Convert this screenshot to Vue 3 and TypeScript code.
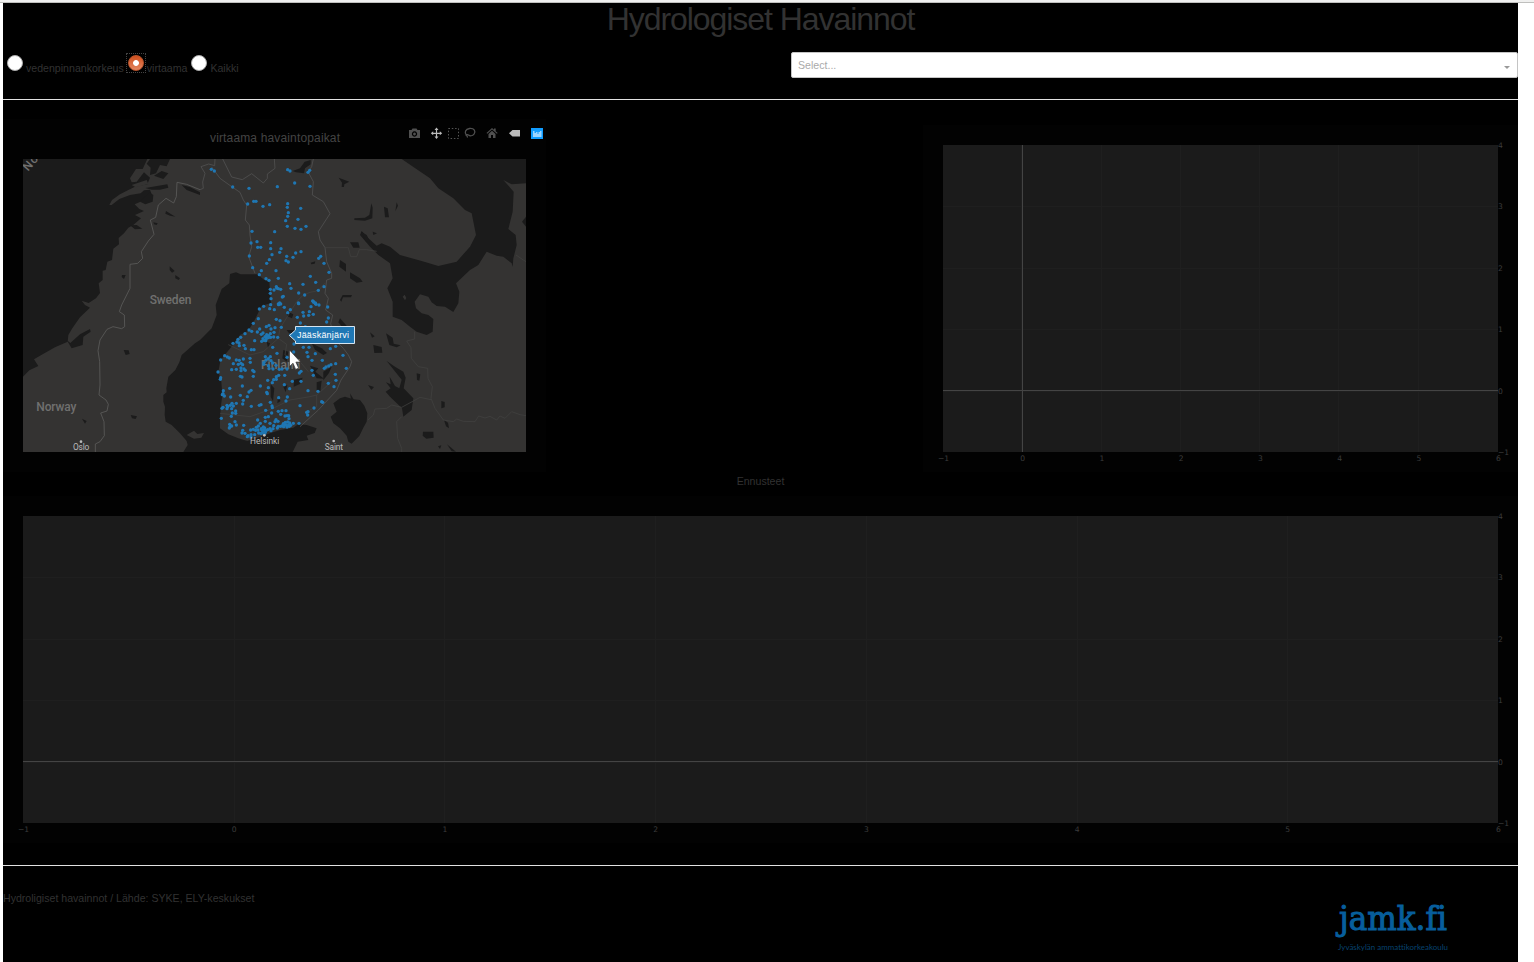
<script setup lang="ts">
import { ref } from 'vue'

interface Chart { width: number; plot: number }

const options = ['vedenpinnankorkeus', 'virtaama', 'Kaikki']
const selected = ref('virtaama')

const small: Chart = { width: 595, plot: 555 }
const large: Chart = { width: 1515, plot: 1475 }
const xTicks = [0, 1, 2, 3, 4, 5, 6, 7]
const yTicks = [0, 1, 2, 3, 4, 5]
const xGrid = xTicks.slice(1, -1)
const yGrid = yTicks.slice(1, -1)
const tick = (n: number) => (n < 0 ? '−' + -n : String(n))

const parse = (s: string) => s.trim().split(/\s+/).map(p => p.split(',').map(Number))

// Observation stations, in the map tile's own units (three to a pixel)
const north = parse(`64,43 73,48 293,44 300,48 354,52 359,46 314,84 262,95 360,94 128,96 177,100
173,147 191,139 198,139 219,154 239,149 293,146 292,157 332,160 295,173 293,184 287,197 324,193
292,214 348,214 315,220 333,223 186,229 254,230 183,264 201,260 242,263 203,277 212,277 242,281
273,281 269,292 246,299 178,303 238,314 230,325 290,304 309,307 317,294 333,290 288,317 295,321
392,304 386,310 402,325 417,352 188,338 214,347 208,359 258,347 228,371 237,376 265,370 361,364
377,382 299,386 303,400 339,388 402,395 385,406 259,395 265,401 272,403 260,399 252,405 241,403
241,415 243,431 277,426 280,424 326,414 344,420 370,439 376,444 326,446 265,447 272,447 378,448`)
const south = parse(`208,27 221,19 239,26 253,29 269,9 266,14 242,14 283,22 205,56 190,70 177,90 165,101
152,112 144,118 141,126 129,130 147,129 148,137 162,136 166,146 184,149 192,149 194,122 185,94
202,96 209,87 214,103 219,99 229,80 237,76 243,87 255,83 259,58 270,62 274,82 252,97 241,101 230,104
225,110 219,116 215,124 222,121 228,118 235,113 242,112 251,111 263,112 229,111 236,107 227,122
301,29 293,38 325,9 322,52 339,37 341,48 356,46 358,35 370,43 363,20 387,15 377,11 371,7 368,3
413,21 415,54 410,66 331,69 346,80 302,105 312,132 340,142 357,142 351,157 354,170 376,161
437,139 421,146 459,166 469,205 437,191 423,194 416,198 408,201 403,205 397,181 366,181 366,211
370,226 436,223 438,241 432,260 415,250 333,244 333,214 328,219 307,244 291,207 284,226 266,226
259,230 259,238 247,248 251,239 233,241 211,258 235,263 230,277 232,281 246,318 241,307 266,293
292,291 288,303 283,254 299,266 308,177 311,156 291,172 261,160 248,142 241,170 235,176 228,180
222,187 221,193 235,197 237,206 249,207 248,189 243,182 226,170 258,196 268,208 276,207
180,175 181,187 160,177 148,181 153,190 145,193 158,194 153,204 162,207 139,208 153,212 166,211
188,211 192,215 190,229 151,229 156,231 139,180 130,191 125,209 104,167 112,171 118,174 92,180
84,216 92,233 91,238 119,265 100,272 99,281 103,288 97,284 122,291 151,286 157,258 183,271 177,276
172,290 160,301 158,312 184,319 208,316 213,314 227,331 245,339 235,350 226,352 247,323
139,310 126,310 121,316 130,318 113,320 111,326 125,326 127,339 137,333 137,340 124,349 99,322
96,325 94,355 111,316 119,373 121,379 118,384 135,365 139,375 125,378 161,376 158,391 156,399
165,400 172,410 183,404 182,390 190,388 199,382 205,378 197,391 206,399 214,386 220,381 224,384
216,391 222,390 229,391 219,397 226,397 224,402 213,401 204,390 183,411 194,404 211,370 226,364
203,360 240,370 251,377 255,365 249,386 240,386 265,379 272,379 262,384 281,380 280,371 286,367
293,366 289,375 296,376 302,376 284,375 291,381 299,369 298,379 277,377 264,364 258,359 291,347
297,356 310,370 327,370 265,334 276,332 288,332 272,343 285,348 296,347 330,317 353,345 354,335
372,324 395,305 398,307 384,274 354,272 350,337 214,400 174,407 243,392 233,389`)

const water = [
  // Norwegian Sea
  '9,12 382,12 368,42 348,42 330,70 335,82 350,80 372,52 390,68 382,88 345,95 325,105 300,118 276,135 268,150 275,150 298,132 330,120 362,115 372,106 390,104 395,118 365,139 344,148 358,162 372,168 345,180 363,190 340,210 325,218 312,235 296,249 297,268 280,281 276,315 262,320 257,345 248,347 248,375 236,385 240,414 228,430 206,444 185,437 195,450 210,458 180,487 157,520 145,540 143,560 105,577 60,602 42,613 55,633 28,646 9,665',
  '140,555 151,564 180,538 210,522 212,530 190,545 188,570 155,580',
  '390,12 450,12 440,34 420,30 408,55 390,60 392,38 380,26',
  '445,55 430,72 402,62 425,48', '376,99 442,88 445,98 420,104 395,104',
  '388,112 400,120 398,140 376,148 360,140', '485,90 510,96 540,112 540,120 500,105',
  '438,168 466,185 450,182 436,176', '330,211 350,210 367,221 345,223', '400,202 413,205 410,210 402,208',
  '449,334 464,348 456,353 449,345', '466,360 480,370 476,375 466,370', '306,360 317,360 312,372 305,366',
  '311,585 326,586 329,597 317,600', '332,780 351,784 347,792 336,790', '186,791 200,798 195,806',
  // Gulf of Bothnia and Gulf of Finland
  '630,357 648,352 662,358 712,358 732,374 748,382 750,410 753,444 725,452 704,495 685,527 660,540 637,572 614,600 601,618 595,650 604,680 607,720 602,760 600,795 600,820 625,838 655,850 682,858 700,852 718,847 750,835 780,825 820,818 835,808 860,810 890,820 884,834 860,842 865,855 833,860 818,891 490,891 503,870 500,858 480,835 455,810 437,800 434,780 435,755 430,740 430,720 440,712 439,700 445,665 466,645 478,622 485,600 503,584 525,565 540,555 555,540 575,520 590,480 587,450 605,402 628,385',
  // Lakes and White Sea
  '940,745 960,730 975,725 1000,733 1020,735 1033,752 1042,775 1040,800 1030,818 1018,843 995,866 985,860 980,842 960,820 940,805 932,785 950,770',
  '1145,12 1230,70 1255,100 1300,130 1335,165 1355,175 1368,240 1350,275 1310,320 1255,333 1205,318 1140,300 1110,275 1085,265 1070,272 1045,250 1025,228 1020,240 1050,275 1075,300 1110,325 1118,370 1102,400 1118,440 1118,485 1145,495 1170,515 1190,530 1220,540 1238,530 1240,492 1225,480 1205,475 1188,460 1184,440 1200,418 1225,425 1235,442 1250,453 1275,455 1300,471 1315,445 1318,410 1308,385 1350,345 1375,330 1400,290 1430,302 1450,305 1475,325 1478,336 1480,310 1490,270 1487,240 1465,222 1478,170 1481,110 1450,75 1475,88 1518,85 1518,12',
  '1518,185 1506,200 1518,215',
  '818,48 840,40 854,20 872,15 872,28 855,40 852,55 828,52', '956,68 988,80 973,88 972,96 965,96 966,83',
  '1054,145 1058,158 1057,190 1035,197 1003,195 1003,190 1035,188 1048,180', '1092,155 1103,160 1107,187 1095,187',
  '1130,142 1134,152 1126,169', '1024,230 1040,240 1052,264 1036,258', '1058,230 1071,235 1060,240',
  '990,262 1015,262 1019,278 1000,278', '960,315 978,327 978,350 958,335', '990,352 1020,370 1028,380 1010,383 990,370',
  '960,435 968,420 996,420 993,427 969,427 964,440', '872,323 886,319 884,326 874,328',
  '1098,535 1118,548 1121,566 1142,571 1130,577 1108,570', '1060,570 1085,576 1087,593 1063,594', '1050,532 1064,544 1056,548',
  '1100,618 1125,635 1150,650 1157,668 1151,700 1180,730 1175,765 1150,785 1146,760 1110,725 1097,710 1112,700 1098,682 1112,688 1109,665 1125,693 1138,700 1145,674',
  '1190,655 1201,658 1198,677 1191,675', '1264,738 1274,741 1274,757 1264,760', '1209,830 1240,830 1241,848 1219,851 1208,842',
  '1272,795 1284,803 1287,820 1278,814', '1281,868 1308,890 1295,889', '1254,874 1264,871 1260,882', '1044,690 1062,696 1054,705',
  '960,490 985,518 970,520 955,502', '800,468 820,478 816,490 802,484', '800,525 835,525 842,550 815,545',
  '875,565 905,580 921,594 910,600 885,584', '790,585 805,590 800,620 787,610', '870,632 895,640 886,650 912,671 890,670',
  '910,650 935,635 927,654 910,676', '822,674 848,668 840,687 821,695', '790,695 802,690 797,712', '890,682 905,677 901,710 890,705',
  '752,688 763,700 759,739 752,725', '740,560 750,565 744,580', '774,725 782,738 772,745', '990,715 1002,735 994,739'
]
const borders = [
  '540,104 500,88 471,82 469,125 461,144 438,130 415,150 407,187 391,195 402,238 385,258 364,290 368,310 353,325 330,328 330,400 305,450 298,470 313,480 314,515 305,521 279,515 261,523 240,555 234,587 239,620 240,690 237,720 258,735 265,748 261,768 242,774 252,800 253,842 240,860 226,867 226,891'
]
const dim = [
  '540,104 550,100 548,81 555,55 543,35 566,27 584,32 585,12',
  '575,36 600,70 635,95 660,112 670,135 680,150 676,195 688,210 690,240 695,275 686,305 705,355',
  '608,12 635,66 667,74 695,56 730,84 742,70 742,57 765,40 763,12',
  '880,12 875,35 864,50 880,80 877,120 910,140 930,176 895,230 900,255 915,278 920,320 935,355 935,370 920,375 915,415 925,430 917,465 938,480 932,506 940,535 950,560 970,580 985,600 995,620 990,635 963,675 950,706 895,765 840,815'
]
const faint = [
  '915,278 985,278 992,305 1010,305 1018,284 1040,284 1070,289', '1488,300 1510,315 1518,320',
  '1184,530 1184,552 1160,558 1173,578 1174,610 1195,635 1223,640 1224,670 1237,695 1233,730 1245,760 1270,795 1300,800 1310,792 1330,799 1365,800 1376,783 1395,789 1410,784 1430,795 1440,783 1455,790 1475,770 1500,779 1518,782',
  '1044,795 1060,780 1065,762 1100,760 1115,750 1145,757 1180,738 1200,727 1233,734', '1145,785 1130,800 1133,850 1145,880 1145,891',
  '625,569 690,600 730,590 775,550 780,520 805,480 830,440 850,420 870,412 895,407 914,385',
  '775,550 800,568 795,600 840,620 865,650', '600,775 690,785 755,762 810,735 870,725 890,720 935,680',
  '890,720 890,755 870,765'
]
</script>

<template>
  <div class="window">
    <div class="chrome"></div>
    <main class="page">
      <h1>Hydrologiset Havainnot</h1>
      <section class="controls">
        <div class="radios">
          <label v-for="o in options" :key="o" :class="{ on: selected === o }" @click="selected = o">
            <span class="ring"><i class="radio"></i></span><span class="name">{{ o }}</span>
          </label>
        </div>
        <div class="select"><span>Select...</span><i class="caret"></i></div>
      </section>
      <hr />
      <section class="row">
        <svg class="map" width="543" height="372" viewBox="3 100 543 372">
          <rect x="3" y="119" width="543" height="353" fill="#020202" />
          <text x="275" y="142" text-anchor="middle" class="map-title" textLength="130">virtaama havaintopaikat</text>
          <g class="tools">
            <path fill="#505050" fill-rule="evenodd" d="M409 130h2.5l1-1.500h4l1 1.500h2.500v8h-11zM414.500 131.300a2.700 2.700 0 1 0 .01 0zM414.500 132.600a1.400 1.400 0 1 1-.01 0z" />
            <path fill="#bbb" d="M436.500 127.500l2 2.500h-1.400v2.700h2.700v-1.400l2.400 2-2.400 2v-1.400h-2.700v2.700h1.400l-2 2.500-2-2.500h1.400v-2.700h-2.700v1.400l-2.400-2 2.400-2v1.400h2.700v-2.700h-1.400z" />
            <rect x="448.500" y="128.500" width="10" height="10" fill="none" stroke="#555" stroke-dasharray="1.500 1.800" />
            <path fill="none" stroke="#505050" stroke-width="1.300" d="M467 137.500c1-1 0-1.700-.7-2.500-2-2.500-1-6 3.200-6.500 5-.4 6.500 3 4.500 5.700-1.500 1.800-4 2-5.500.8-1.200-.8-2.500-.3-2.500.8" />
            <path fill="#505050" d="M486.500 133l5.500-5 2 1.800v-1.300h1.700v2.800l2 1.700-.8.800-4.900-4.300-4.700 4.300zM488.500 134l3.500-3.200 3.500 3.200v4h-2.500v-3h-2v3h-2.500z" />
            <path fill="#bbb" d="M509 133.300l3.500-3.200h7.500v6.400h-7.500z" />
            <rect x="531" y="128" width="12" height="11" fill="#119dff" />
            <path fill="#9bd5ff" d="M533 131h1.500v2h1.500v-1h1.500v2h1v-2h1.500v-1h1.500v6h-8.500z" />
          </g>
          <svg x="23" y="159" width="503" height="293" viewBox="9 12 1509 879">
            <rect x="9" y="12" width="1509" height="879" fill="#343332" />
            <polygon v-for="(w, i) in water" :key="'w' + i" :points="w" fill="#1b1b1b" />
            <path fill="#343332" d="M500 840l22-13 10 10 20-3-8 14-22 3zM1148 425l6-6 5 10-4 7zM335 90l45-15 5 12-38 10z" />
            <polyline v-for="(b, i) in borders" :key="'b' + i" :points="b" class="border" />
            <polyline v-for="(b, i) in dim" :key="'d' + i" :points="b" class="border dim" />
            <polyline v-for="(b, i) in faint" :key="'f' + i" :points="b" class="border faint" />
            <g class="place">
              <text x="389" y="447" textLength="125">Sweden</text>
              <text x="49" y="767" textLength="120">Norway</text>
              <text x="723" y="641" textLength="118">Finland</text>
              <text x="24" y="50" transform="rotate(-48 24 50)" letter-spacing="3">No</text>
            </g>
            <g fill="#1f77b4">
              <circle v-for="(p, i) in north" :key="'n' + i" :cx="p[0] + 510" :cy="p[1]" r="5" />
              <circle v-for="(p, i) in south" :key="'s' + i" :cx="p[0] + 510" :cy="p[1] + 435" r="5" />
            </g>
            <g class="city">
              <text x="159" y="886" textLength="49">Oslo</text>
              <text x="690" y="867" textLength="88">Helsinki</text>
              <text x="914" y="884" textLength="55">Saint</text>
              <circle cx="183" cy="860" r="4" /><circle cx="733" cy="841" r="4" /><circle cx="941" cy="858" r="4" />
            </g>
          </svg>
          <path class="tip" d="M289.500 335.500L295.500 330V326.500H354.500V343.500H295.500V341Z" />
          <text x="297" y="338.300" class="tip-text" textLength="52">Jääskänjärvi</text>
          <path fill="#fff" stroke="#222" stroke-width=".6" d="M289.500 350v16.500l3.500-3.300 2.700 6.200 2.900-1.300-2.700-6h4.600z" />
        </svg>
        <svg class="chart" :width="small.width" height="347">
          <rect width="595" height="347" fill="#020202" />
          <rect x="20" y="20" :width="small.plot" height="307" fill="#1b1b1b" />
          <path v-for="i in xGrid" :key="i" class="grid" :d="`M${Math.round(20 + i * small.plot / 7) - .5} 20v307`" />
          <path v-for="i in yGrid" :key="'g' + i" class="grid" :d="`M20 ${Math.round(20 + i * 61.4) + .5}h${small.plot}`" />
          <path class="zero" d="M99.500 20v307M20 265.500h555" />
          <text v-for="i in xTicks" :key="'x' + i" :x="(i ? 20.300 : 20.600) + i * small.plot / 7" y="336" text-anchor="middle">{{ tick(i - 1) }}</text>
          <text v-for="i in yTicks" :key="'y' + i" x="575" :y="23 + i * 61.4">{{ tick(4 - i) }}</text>
        </svg>
      </section>
      <div class="caption">Ennusteet</div>
      <svg class="chart" :width="large.width" height="347">
        <rect width="1515" height="347" fill="#020202" />
        <rect x="20" y="20" :width="large.plot" height="307" fill="#1b1b1b" />
        <path v-for="i in xGrid" :key="i" class="grid" :d="`M${Math.round(20 + i * large.plot / 7) + .5} 20v307`" />
        <path v-for="i in yGrid" :key="'g' + i" class="grid" :d="`M20 ${Math.round(20 + i * 61.4) + .5}h${large.plot}`" />
        <path class="zero" d="M20 265.500h1475" />
        <text v-for="i in xTicks" :key="'x' + i" :x="20.500 + i * large.plot / 7" y="336" text-anchor="middle">{{ tick(i - 1) }}</text>
        <text v-for="i in yTicks" :key="'y' + i" x="1495" :y="23 + i * 61.4">{{ tick(4 - i) }}</text>
      </svg>
      <hr class="lower" />
      <footer>
        <span>Hydroligiset havainnot / Lähde: SYKE, ELY-keskukset</span>
        <svg width="126" height="60" viewBox="-6 0 126 60">
          <text x="3" y="31" class="logo" textLength="108" lengthAdjust="spacingAndGlyphs">jamk.fi</text>
          <text x="2" y="51" class="sub" textLength="110" lengthAdjust="spacingAndGlyphs">Jyväskylän ammattikorkeakoulu</text>
        </svg>
      </footer>
    </main>
  </div>
</template>

<style>
body { margin: 0; overflow: hidden; background: #fff; }
</style>
<style scoped>
.window { width: 1534px; height: 962px; overflow: hidden; background: #fff; font: 10.6px "Liberation Sans", Arial, sans-serif; color: #323232; }
.chrome { height: 2px; background: #f0f0ef; border-bottom: 1px solid #bfbfbd; }
.page { width: 1515px; height: 959px; margin-left: 3px; background: #000; }
h1 { margin: 0; height: 49px; text-align: center; font-size: 32px; line-height: 33px; font-weight: 400; letter-spacing: -1.05px; }
.controls { display: flex; justify-content: space-between; height: 47px; }
.radios { display: flex; padding-left: 2px; }
label { display: flex; height: 22px; margin-right: 2px; }
.ring { display: flex; align-items: center; justify-content: center; width: 18px; height: 18px; margin-top: 1px; border: 1px solid transparent; }
.radio { width: 14px; height: 14px; border-radius: 50%; background: #fff; border: 1px solid #aaa; }
.name { margin-left: 1px; padding-top: 10px; line-height: 13px; }
.on .ring { border: 1px dotted #444; }
.on .radio { background: radial-gradient(circle, #fff 0 2.500px, transparent 3.300px), linear-gradient(#cf4f1d, #e38661); border-color: #b9532b; }
.select { display: flex; align-items: center; justify-content: space-between; box-sizing: border-box; width: 727px; height: 26px; padding: 0 7px 0 6px; border: 1px solid #c4c4c4; border-radius: 2px; background: #fff; color: #aaa; }
.caret { border: 3px solid transparent; border-top-color: #999; margin-top: 4px; border-bottom: 0; }
hr { margin: 0; border: 0; height: 1px; background: #e1e1e1; }
.row { display: flex; justify-content: space-between; height: 372px; }
.chart { display: block; }
.row .chart { margin-top: 25px; }
.chart text { font: 7.6px "DejaVu Sans", Verdana, sans-serif; fill: #3c3c3c; }
.grid { stroke: #1f1f1f; }
.zero { stroke: #444; fill: none; }
.caption { height: 24px; line-height: 18px; text-align: center; }
.map-title { font: 12px "Liberation Sans", sans-serif; fill: #444; }
.border { fill: none; stroke: #5b5b5a; stroke-width: 2.500; stroke-linejoin: round; }
.dim { stroke: #505050; }
.faint { stroke: #424241; stroke-width: 2.200; }
.place { font: 500 36px Roboto, sans-serif; fill: #70706f; }
.city { font: 25px Roboto, sans-serif; fill: #bbb; }
.tip { fill: #1f77b4; stroke: #d5e4f0; stroke-width: 1; }
.tip-text { font: 9px "Liberation Sans", sans-serif; fill: #fff; }
.lower { margin-top: 22px; }
footer { display: flex; justify-content: space-between; padding: 25px 62px 0 0; line-height: 15px; }
footer svg { margin-top: 8px; }
.logo { font: 33px "DejaVu Serif", serif; font-variant-ligatures: none; fill: #075e9c; stroke: #075e9c; stroke-width: 1.100; }
.sub { font: 7px Lato, sans-serif; font-variant-ligatures: none; fill: #06436f; }
</style>
